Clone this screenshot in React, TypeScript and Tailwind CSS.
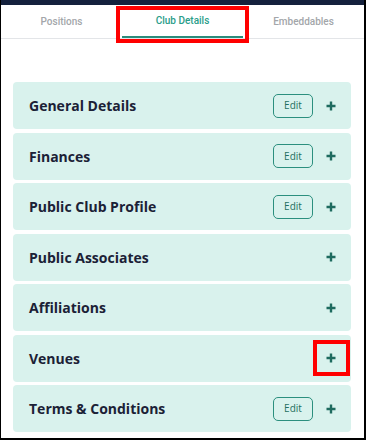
import React from "react";

const sections = [
  { title: "General Details", edit: true },
  { title: "Finances", edit: true },
  { title: "Public Club Profile", edit: true },
  { title: "Public Associates", edit: false },
  { title: "Affiliations", edit: false },
  { title: "Venues", edit: false, marked: true },
  { title: "Terms & Conditions", edit: true },
];

function Plus() {
  return (
    <svg width="10" height="10" viewBox="0 0 10 10" className="block">
      <path d="M5 0.5v9M0.5 5h9" stroke="#1e6b5f" strokeWidth="2.4" />
    </svg>
  );
}

export default function App() {
  const tabs = ["Positions", "Club Details", "Embeddables"];
  return (
    <div className="w-[366px] h-[440px] bg-white border-l border-r-2 border-b-2 border-black flex flex-col overflow-hidden">
      <div className="h-[5px] bg-[#14213d] shrink-0" />
      <div className="flex h-[34px] border-b border-[#e3e5e8] shrink-0" style={{ fontFamily: "Roboto, sans-serif" }}>
        {tabs.map((t) => {
          const active = t === "Club Details";
          return (
            <div
              key={t}
              className={
                "relative flex-1 flex items-center justify-center text-[10px] " +
                (active
                  ? "text-[#2a9d8a] font-medium border-b-2 border-[#2a8c7c]"
                  : "text-[#a3a6aa] font-medium")
              }
            >
              {t}
              {active && (
                <div className="absolute left-[-6px] top-[1px] w-[133px] h-[37px] border-4 border-[#ff0000]" />
              )}
            </div>
          );
        })}
      </div>
      <div className="flex flex-col gap-[3.5px] pt-[43px] pl-[12px] pr-[13px]" style={{ fontFamily: "'Open Sans', sans-serif" }}>
        {sections.map((s) => (
          <div
            key={s.title}
            className="h-[47px] rounded-[4px] bg-[#d9f2ed] flex items-center justify-between pl-4 pr-[15px]"
          >
            <span className="text-[14px] font-bold text-[#1b2136]">{s.title}</span>
            <div className="flex items-center gap-[13px]">
              {s.edit && (
                <div className="w-[40px] h-[24px] rounded-[5px] border-[1.5px] border-[#2b8f7e] flex items-center justify-center text-[10px] text-[#24705f]">
                  Edit
                </div>
              )}
              <span className="relative">
                <Plus />
                {s.marked && (
                  <div className="absolute left-[-13px] top-[-13px] w-[37px] h-[36px] border-4 border-[#ff0000]" />
                )}
              </span>
            </div>
          </div>
        ))}
      </div>
    </div>
  );
}
